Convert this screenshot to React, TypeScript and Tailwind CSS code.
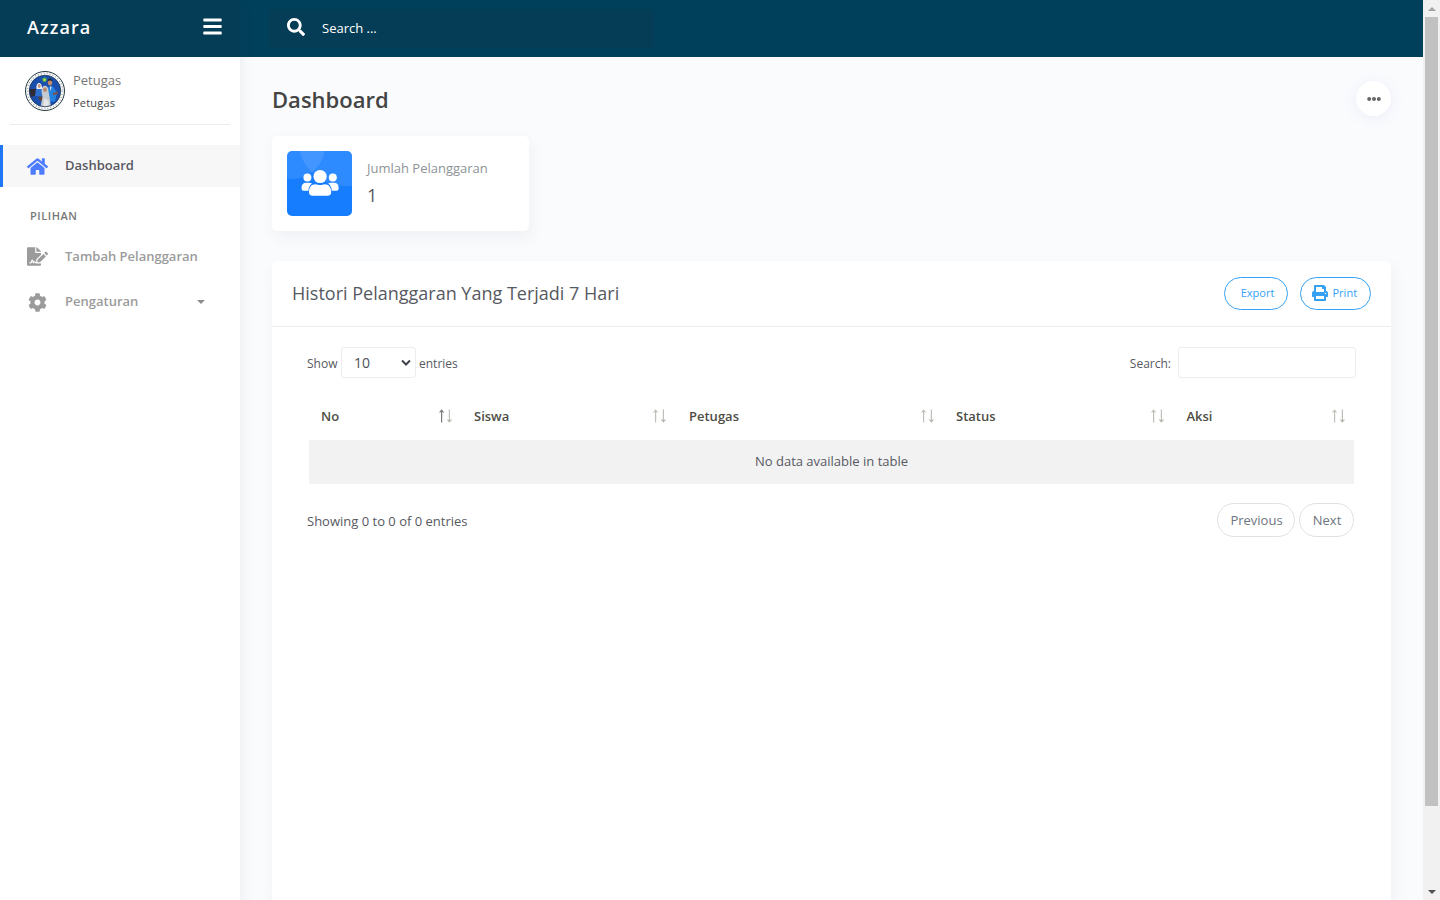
import { FaBars, FaCog, FaEllipsisH, FaFileSignature, FaHome, FaPrint, FaSearch } from "react-icons/fa";

function Avatar() {
  return (
    <svg viewBox="0 0 40 40" className="block size-10 shrink-0">
      <circle cx="20" cy="20" r="19.500" fill="#fff" stroke="#25383d" strokeWidth="1" />
      <circle cx="20" cy="20" r="17.600" fill="none" stroke="#a9b4b6" strokeWidth="1.500" strokeDasharray="1.200 1.800" />
      <clipPath id="disc">
        <circle cx="20" cy="20" r="15.800" />
      </clipPath>
      <g clipPath="url(#disc)">
        <rect width="40" height="40" fill="#1b4fae" />
        <path d="M4 18h9l2 5-9 3z" fill="#2f2b35" />
        <path d="M10 25l1-7h7l1 8z" fill="#2c6fd0" />
        <path d="M11.500 18c-1-8 6-8 5.500 0z" fill="#eef1f3" />
        <ellipse cx="14.200" cy="15" rx="1.500" ry="1.900" fill="#c9977c" />
        <path d="M21 19l3-3.500h4l4 6-2 9h-8z" fill="#2381e0" />
        <path d="M25 15.500l.5 5 1-5z" fill="#eef1f3" />
        <ellipse cx="25" cy="11.500" rx="2.200" ry="3" fill="#c08a6c" />
        <path d="M22.500 10.500c0-4 5-4 5 0l-2.500-1.300z" fill="#1f2530" />
        <path d="M28 22l5-1.500v2.200l-5 1.500z" fill="#7b5549" />
        <path d="M13 25.500h5l-.5 4.500H15z" fill="#5b4439" />
        <path d="M15.500 36l2-10-1-6c0-7 7-7 7 0l1 6 1.500 10z" fill="#c5cad0" />
        <ellipse cx="20" cy="18.700" rx="1.800" ry="2.300" fill="#b98468" />
        <path d="M18 36l1.500-9 4 3 .5 6z" fill="#e4e6e8" />
        <circle cx="19.500" cy="8.800" r="2.200" fill="#58b947" />
        <circle cx="19.500" cy="8.800" r=".9" fill="#e4e755" />
      </g>
      <circle cx="20" cy="20" r="15.800" fill="none" stroke="#1d3550" strokeWidth=".8" />
    </svg>
  );
}

function UsersIcon() {
  return (
    <svg viewBox="0 0 38 28" className="relative mb-px h-7 w-[38px]" fill="#fff">
      <circle cx="6.400" cy="8.400" r="4" />
      <circle cx="31.800" cy="8.400" r="4" />
      <path d="M.6 18.500c0-3 1.800-4.800 4.400-4.800h3.200c1 0 2 .3 2.800.8-2.200 1.500-3.400 3.800-3.600 7.200H3c-1.700 0-2.400-.8-2.400-2z" />
      <path d="M37.600 18.500c0-3-1.800-4.800-4.400-4.800H30c-1 0-2 .3-2.800.8 2.200 1.500 3.400 3.800 3.600 7.200h4.400c1.700 0 2.400-.8 2.400-2z" />
      <circle cx="19.100" cy="7.500" r="6.600" />
      <path d="M8 23c0-5 2.500-7.700 6.600-7.700 1.500 0 2.400.8 4.500.8s3-.8 4.500-.8c4.100 0 6.600 2.700 6.600 7.700 0 2.500-1.300 3.800-3.600 3.800h-15C9.300 26.800 8 25.500 8 23z" />
    </svg>
  );
}

function SortArrows({ active }: { active?: boolean }) {
  const up = active ? "#7a7a7a" : "#c0c0ba";
  return (
    <svg viewBox="0 0 15 14" className="mb-0.5 h-[14px] w-[15px]">
      <path d="M3 2h1.200v11.500H3z" fill={up} />
      <path d="M3.600 .2L6.400 3.800 3.600 3 .8 3.800z" fill={up} />
      <path d="M10.800 .5H12V12h-1.200z" fill="#c0c0ba" />
      <path d="M11.400 13.800L14.200 10.200 11.400 11 8.600 10.200z" fill="#b4b4ae" />
    </svg>
  );
}

const columns = [
  { name: "No", width: "w-[153px] pr-[9px]" },
  { name: "Siswa", width: "w-[215px] pr-[10px]" },
  { name: "Petugas", width: "w-[267px] pr-[9px]" },
  { name: "Status", width: "w-[230.500px] pr-[9.500px]" },
  { name: "Aksi", width: "w-[179.500px] pr-[8px]" },
];

function Sidebar() {
  return (
    <aside className="z-10 flex w-60 shrink-0 flex-col bg-white shadow-[4px_4px_10px_rgba(69,65,78,0.06)]">
      <div className="flex h-[57px] items-center justify-between bg-[#053c56] pr-[18px] pl-[27px] text-white">
        <span className="pb-0.5 text-[18px] font-semibold tracking-[1.100px]">Azzara</span>
        <FaBars className="mb-1 h-[21px] w-[19px]" />
      </div>
      <div className="mx-[10px] flex h-[68px] border-b border-[#ededed] pt-[14px] pl-[15px]">
        <Avatar />
        <div className="ml-2">
          <div className="text-[13px] leading-[19px] text-[#777]">Petugas</div>
          <div className="mt-[3px] text-[11px] leading-[19px] tracking-[0.200px] text-[#444]">Petugas</div>
        </div>
      </div>
      <nav className="pt-5 text-[13px] font-semibold text-[#9b9b9b]">
        <a className="flex h-[42px] items-center border-l-[3px] border-[#1f77f5] bg-[#f7f7f7] pl-6 text-[#575962]">
          <FaHome className="mr-[17px] size-[21px] text-[#4d7cfe]" />
          <span className="pb-px">Dashboard</span>
        </a>
        <div className="mt-5 pl-[30px] text-[11px] leading-[18px] tracking-[0.550px] text-[#777]">PILIHAN</div>
        <a className="mt-[10px] flex h-[43px] items-center pl-[27px]">
          <FaFileSignature className="mr-[17px] h-[19px] w-[21px]" />
          <span className="pb-px">Tambah Pelanggaran</span>
        </a>
        <a className="mt-[2px] flex h-[43px] items-center pr-[35px] pl-[27px]">
          <FaCog className="mt-px mr-[17px] h-[19px] w-[21px]" />
          <span className="grow pb-px">Pengaturan</span>
          <span className="border-x-4 border-t-4 border-x-transparent border-t-[#8d8d8d]" />
        </a>
      </nav>
    </aside>
  );
}

function Scrollbar() {
  return (
    <div className="flex w-[17px] shrink-0 flex-col items-center bg-[#f1f1f1]">
      <div className="flex h-[17px] items-center">
        <span className="border-x-4 border-b-4 border-x-transparent border-b-[#a3a3a3]" />
      </div>
      <div className="h-[789px] w-[13px] bg-[#c1c1c1]" />
      <div className="grow" />
      <div className="flex h-[17px] items-center">
        <span className="border-x-4 border-t-4 border-x-transparent border-t-[#505050]" />
      </div>
    </div>
  );
}

export default function App() {
  return (
    <div className="flex h-[900px] w-[1440px] overflow-hidden bg-[#f9fbfd] font-['Open_Sans',sans-serif] text-sm text-[#575962]">
      <Sidebar />
      <div className="flex min-w-0 grow flex-col">
        <header className="flex h-[57px] shrink-0 items-center bg-[#00405b] pl-[29px]">
          <div className="flex h-[39px] w-[385px] items-center rounded-[5px] bg-[#053c56] pl-[18px] text-[13px] text-white">
            <FaSearch className="mb-[3px] size-[18px]" />
            <span className="ml-[17px]">Search ...</span>
          </div>
        </header>
        <main className="flex min-h-0 grow flex-col px-8">
          <div className="mt-6 flex h-[35px] items-center justify-between">
            <h1 className="pt-px text-[22px] leading-[30px] font-semibold text-[#444]">Dashboard</h1>
            <button className="flex size-[35px] items-center justify-center rounded-full bg-white shadow-[0_2px_14px_rgba(144,116,212,0.1)]">
              <FaEllipsisH className="size-[14px] text-[#666]" />
            </button>
          </div>
          <section className="mt-5 flex h-[95px] w-[257px] shrink-0 rounded-[5px] bg-white p-[15px] shadow-[2px_6px_15px_rgba(69,65,78,0.06)]">
            <div className="relative flex size-[65px] items-center justify-center overflow-hidden rounded-[5px] bg-[#177dff]">
              <svg viewBox="0 0 65 65" className="absolute inset-0 size-full" fill="#fff" fillOpacity=".1">
                <circle cx="5" cy="-5" r="33" />
                <circle cx="58" cy="-12" r="47" />
              </svg>
              <UsersIcon />
            </div>
            <div className="ml-[15px] pt-2">
              <p className="text-[13px] leading-[19px] text-[#8d9498]">Jumlah Pelanggaran</p>
              <p className="mt-[5px] text-[18px] leading-[25px]">1</p>
            </div>
          </section>
          <section className="mt-[30px] flex min-h-0 grow flex-col rounded-t-[5px] bg-white shadow-[2px_6px_15px_rgba(69,65,78,0.06)]">
            <div className="flex h-[66px] shrink-0 items-center border-b border-[#ebecec] px-5">
              <h2 className="grow text-[18px]">Histori Pelanggaran Yang Terjadi 7 Hari</h2>
              <button className="mr-3 h-[33px] w-16 rounded-full border border-[#35a1f4] pb-0.5 pl-[3px] text-[11px] text-[#35a1f4]">Export</button>
              <button className="flex h-[33px] w-[71px] items-center rounded-full border border-[#35a1f4] pb-0.5 pl-[10.500px] text-[11px] text-[#35a1f4]">
                <FaPrint className="mr-[5px] size-4" />
                Print
              </button>
            </div>
            <div className="px-[35px] pt-5">
              <div className="flex h-[31px] items-center text-[12px]">
                <span className="w-[34px] pt-0.5">Show</span>
                <span className="mr-[3px] flex h-[31px] w-[75px] items-center justify-between rounded-[3px] border border-[#ebedf2] pr-1 pl-3 text-sm text-[#495057]">
                  10
                  <svg viewBox="0 0 10 8" className="h-2 w-[10px]" fill="none" stroke="#3e444b" strokeWidth="2">
                    <path d="M1 1.500l4 4 4-4" />
                  </svg>
                </span>
                <span className="grow pt-0.5">entries</span>
                <span className="mr-[7px] pt-0.5">Search:</span>
                <span className="h-[31px] w-[178px] rounded-[3px] border border-[#ebedf2]" />
              </div>
              <div className="mx-[2px] mt-[15px]">
                <div className="flex h-[47px] items-center text-[13px] font-semibold text-[#4d4d45]">
                  {columns.map((c, i) => (
                    <div key={c.name} className={`flex shrink-0 items-center justify-between pl-3 ${c.width}`}>
                      <span>{c.name}</span>
                      <SortArrows active={i === 0} />
                    </div>
                  ))}
                </div>
                <div className="flex h-11 items-center justify-center bg-[#f2f2f2] pb-px text-[13px]">No data available in table</div>
              </div>
              <div className="mt-[19px] mr-[2px] flex h-[34px] items-center text-[13px]">
                <span className="grow pt-0.5">Showing 0 to 0 of 0 entries</span>
                <button className="mr-1 h-[34px] w-[78px] rounded-full border border-[#dee2e6] pl-px text-[#6c757d]">Previous</button>
                <button className="h-[34px] w-[55px] rounded-full border border-[#dee2e6] pl-px text-[#6c757d]">Next</button>
              </div>
            </div>
          </section>
        </main>
      </div>
      <Scrollbar />
    </div>
  );
}
